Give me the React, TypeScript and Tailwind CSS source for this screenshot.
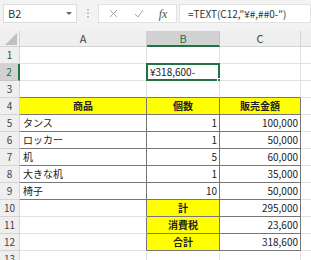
import React from "react";

type Cell = { t?: string; a?: "l" | "r" | "c"; b?: boolean; y?: boolean };

const rows: Record<number, Cell[]> = {
  4: [{ t: "商品", a: "c", b: true, y: true }, { t: "個数", a: "c", b: true, y: true }, { t: "販売金額", a: "c", b: true, y: true }],
  5: [{ t: "タンス" }, { t: "1", a: "r" }, { t: "100,000", a: "r" }],
  6: [{ t: "ロッカー" }, { t: "1", a: "r" }, { t: "50,000", a: "r" }],
  7: [{ t: "机" }, { t: "5", a: "r" }, { t: "60,000", a: "r" }],
  8: [{ t: "大きな机" }, { t: "1", a: "r" }, { t: "35,000", a: "r" }],
  9: [{ t: "椅子" }, { t: "10", a: "r" }, { t: "50,000", a: "r" }],
  10: [{}, { t: "計", a: "c", b: true, y: true }, { t: "295,000", a: "r" }],
  11: [{}, { t: "消費税", a: "c", b: true, y: true }, { t: "23,600", a: "r" }],
  12: [{}, { t: "合計", a: "c", b: true, y: true }, { t: "318,600", a: "r" }],
};

function DataCell({ r, c }: { r: number; c: number }) {
  const cell: Cell = (rows[r] && rows[r][c - 1]) || {};
  const inTable = (r >= 4 && r <= 9) || (r >= 10 && r <= 12 && c >= 2);
  const rightDark = inTable || (r >= 10 && r <= 12 && c === 1);
  const bottomDark = inTable || r === 3;
  const cls = [
    "relative flex items-center border-r border-b overflow-visible whitespace-nowrap",
    rightDark ? "border-r-[#767676]" : "border-r-[#e1e1e1]",
    bottomDark ? "border-b-[#767676]" : "border-b-[#e1e1e1]",
    cell.y ? "bg-[#ffff00]" : "bg-white",
    cell.b ? "font-bold" : "",
    cell.a === "r" ? "justify-end pr-[2px]" : cell.a === "c" ? "justify-center" : "justify-start pl-[3px]",
  ].join(" ");
  const selected = r === 2 && c === 2;
  return (
    <div className={cls}>
      {selected ? (
        <>
          <span className="pl-[0px]">¥318,600-</span>
          <div className="absolute left-[-1px] top-[-1px] right-[-1px] bottom-[-1px] border-2 border-[#217346]" />
          <div className="absolute right-[-3px] bottom-[-3px] w-[5px] h-[5px] bg-[#217346] border border-white" />
        </>
      ) : (
        <span>{cell.t}</span>
      )}
    </div>
  );
}

export default function App() {
  const rowNums = Array.from({ length: 13 }, (_, i) => i + 1);
  return (
    <div className="w-[311px] h-[260px] overflow-hidden bg-white font-['Noto_Sans_CJK_JP',sans-serif] text-[10px] text-[#222] leading-none">
      {/* top bar */}
      <div className="h-[31px] bg-[#f3f3f3] flex items-start pt-[4px] pl-[3px]">
        <div className="w-[74px] h-[19px] bg-white border border-[#dcdcdc] flex items-center justify-between pl-[4px] pr-[4px]">
          <span className="text-[11px] text-[#333]">B2</span>
          <svg width="6" height="4" viewBox="0 0 6 4"><path d="M0 0 L6 0 L3 3 Z" fill="#666" /></svg>
        </div>
        <div className="w-[21px] h-[19px] flex items-center justify-center">
          <svg width="2" height="9" viewBox="0 0 2 9">
            <rect x="0" y="0" width="2" height="1.5" fill="#bbb" />
            <rect x="0" y="3.5" width="2" height="1.5" fill="#bbb" />
            <rect x="0" y="7" width="2" height="1.5" fill="#bbb" />
          </svg>
        </div>
        <div className="w-[79px] h-[19px] bg-white border border-[#e2e2e2] flex items-center">
          <div className="w-[28px] flex justify-center">
            <svg width="9" height="9" viewBox="0 0 9 9"><path d="M1 1 L8 8 M8 1 L1 8" stroke="#a6a6a6" strokeWidth="1" /></svg>
          </div>
          <div className="w-[24px] flex justify-center">
            <svg width="10" height="9" viewBox="0 0 10 9"><path d="M1 5 L4 8 L9 1" stroke="#a6a6a6" strokeWidth="1" fill="none" /></svg>
          </div>
          <div className="w-[24px] flex justify-center">
            <span className="font-['Liberation_Serif',serif] italic text-[12px] text-[#555]">fx</span>
          </div>
        </div>
        <div className="ml-[2px] flex-1 h-[19px] bg-white border border-[#e2e2e2] flex items-center pl-[8px]">
          <span className="text-[10px] text-[#333] whitespace-nowrap">=TEXT(C12,"¥#,##0-")</span>
        </div>
      </div>
      {/* sheet */}
      <div className="grid grid-cols-[20px_127px_73px_81px_1fr] grid-rows-[16px_repeat(13,17px)] text-[#222]">
        {/* header row */}
        <div className="relative bg-[#efefef] border-r border-b border-[#d4d4d4]">
          <svg className="absolute right-[2px] bottom-[1px]" width="12" height="12" viewBox="0 0 12 12"><path d="M12 0 L12 12 L0 12 Z" fill="#c0c0c0" /></svg>
        </div>
        <div className="bg-[#efefef] border-r border-b border-[#d4d4d4] flex items-center justify-center text-[#444] text-[11px]">A</div>
        <div className="bg-[#d2d2d2] border-r border-[#c6c6c6] border-b-2 border-b-[#217346] flex items-center justify-center text-[#217346] text-[11px]">B</div>
        <div className="bg-[#efefef] border-r border-b border-[#d4d4d4] flex items-center justify-center text-[#444] text-[11px]">C</div>
        <div className="bg-[#efefef] border-b border-[#d4d4d4]" />
        {rowNums.map((r) => (
          <React.Fragment key={r}>
            {r === 2 ? (
              <div className="bg-[#d2d2d2] border-b border-[#c6c6c6] border-r-2 border-r-[#217346] flex items-center justify-center text-[#217346] text-[10px]">2</div>
            ) : (
              <div className="bg-[#efefef] border-r border-b border-[#d4d4d4] flex items-center justify-center text-[#444] text-[10px]">{r}</div>
            )}
            <DataCell r={r} c={1} />
            <DataCell r={r} c={2} />
            <DataCell r={r} c={3} />
            <div className="bg-white border-b border-[#e1e1e1]" />
          </React.Fragment>
        ))}
      </div>
    </div>
  );
}
